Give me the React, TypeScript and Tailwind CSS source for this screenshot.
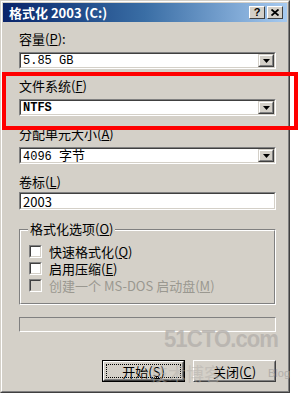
import React from "react";

const cjk = { fontFamily: '"Noto Sans CJK SC", "Liberation Sans", sans-serif' };
const mono = { fontFamily: '"Liberation Mono", "Noto Sans CJK SC", monospace' };

function Sunken({ children, className = "" }: { children?: React.ReactNode; className?: string }) {
  return (
    <div className={"border border-t-[#808080] border-l-[#808080] border-b-white border-r-white " + className}>
      <div className="h-full w-full border border-t-[#404040] border-l-[#404040] border-b-[#d4d0c8] border-r-[#d4d0c8]">
        {children}
      </div>
    </div>
  );
}

function DropBtn() {
  return (
    <div className="h-full w-[16px] border border-t-[#d4d0c8] border-l-[#d4d0c8] border-b-[#404040] border-r-[#404040] bg-[#d4d0c8]">
      <div className="flex h-full w-full items-center justify-center border border-t-white border-l-white border-b-[#808080] border-r-[#808080]">
        <svg width="7" height="4" viewBox="0 0 7 4">
          <path d="M0 0 H7 L3.5 4 Z" fill="#000" />
        </svg>
      </div>
    </div>
  );
}

function Combo({ value, top }: { value: React.ReactNode; top: string }) {
  return (
    <Sunken className={"h-[17px] w-[257px] " + top}>
      <div className="flex h-full bg-white">
        <div className="flex flex-1 items-center pl-[2px] text-[12px] leading-none text-black" style={mono}>
          {value}
        </div>
        <DropBtn />
      </div>
    </Sunken>
  );
}

function Label({ children, top }: { children: React.ReactNode; top: string }) {
  return (
    <div className={"h-[16px] text-[13px] leading-[16px] text-black " + top} style={cjk}>
      {children}
    </div>
  );
}

function Check({ label, disabled }: { label: React.ReactNode; disabled?: boolean }) {
  return (
    <div className="flex h-[17px] items-center">
      <div className="h-[13px] w-[13px] border border-t-[#808080] border-l-[#808080] border-b-white border-r-white">
        <div
          className={
            "h-full w-full border border-t-[#404040] border-l-[#404040] border-b-[#d4d0c8] border-r-[#d4d0c8] " +
            (disabled ? "bg-[#d4d0c8]" : "bg-white")
          }
        />
      </div>
      <div
        className={"ml-[7px] text-[13px] leading-none " + (disabled ? "text-[#9a9890]" : "text-black")}
        style={cjk}
      >
        {label}
      </div>
    </div>
  );
}

function Btn({ children, isDefault }: { children: React.ReactNode; isDefault?: boolean }) {
  return (
    <div className={"h-[22px] w-[83px] bg-[#d4d0c8] " + (isDefault ? "border border-black" : "")}>
      <div className="h-full w-full border border-t-white border-l-white border-b-[#404040] border-r-[#404040]">
        <div className="flex h-full w-full items-center justify-center border border-t-[#d4d0c8] border-l-[#d4d0c8] border-b-[#808080] border-r-[#808080] p-[1px]">
          <div
            className={
              "flex h-full w-full items-center justify-center text-[13px] leading-none text-black " +
              (isDefault ? "border border-dotted border-black" : "")
            }
            style={cjk}
          >
            {children}
          </div>
        </div>
      </div>
    </div>
  );
}

export default function App() {
  return (
    <div className="relative h-[394px] w-[300px] overflow-hidden bg-white">
      {/* window */}
      <div className="h-[393px] w-[290px] border border-t-[#d4d0c8] border-l-[#d4d0c8] border-b-[#404040] border-r-[#404040]">
        <div className="flex h-full w-full flex-col border border-t-white border-l-white border-b-[#808080] border-r-[#808080] bg-[#d4d0c8] px-[1px] pt-[1px]">
          {/* title bar */}
          <div className="flex h-[19px] items-center bg-gradient-to-r from-[#0a246a] via-[#3a6ea5] to-[#a6caf0] pl-[6px] pr-[4px]">
            <div className="flex-1 text-[13px] font-bold leading-none text-white" style={cjk}>
              格式化 2003 (C:)
            </div>
            <div className="flex gap-[1px]">
              <div className="h-[13px] w-[16px] border border-t-white border-l-white border-b-[#404040] border-r-[#404040] bg-[#d4d0c8]">
                <div
                  className="flex h-full w-full items-center justify-center text-[11px] font-bold leading-none text-black"
                  style={{ fontFamily: '"Liberation Sans", sans-serif' }}
                >
                  ?
                </div>
              </div>
              <div className="ml-[1px] h-[13px] w-[16px] border border-t-white border-l-white border-b-[#404040] border-r-[#404040] bg-[#d4d0c8]">
                <div className="flex h-full w-full items-center justify-center">
                  <svg width="8" height="7" viewBox="0 0 8 7">
                    <path d="M0.5 0.5 L7.5 6.5 M7.5 0.5 L0.5 6.5" stroke="#000" strokeWidth="1.8" />
                  </svg>
                </div>
              </div>
            </div>
          </div>

          {/* content */}
          <div className="flex flex-col pl-[16px]">
            <Label top="mt-[9px]">
              容量(<u>P</u>):
            </Label>
            <Combo top="mt-[5px]" value="5.85 GB" />

            <Label top="mt-[9px]">
              文件系统(<u>F</u>)
            </Label>
            <Combo top="mt-[5px]" value={<span className="font-bold">NTFS</span>} />

            <Label top="mt-[10px]">
              分配单元大小(<u>A</u>)
            </Label>
            <Combo
              top="mt-[5px]"
              value={
                <span>
                  4096{" "}
                  <span style={cjk} className="text-[13px]">
                    字节
                  </span>
                </span>
              }
            />

            <Label top="mt-[10px]">
              卷标(<u>L</u>)
            </Label>
            <Sunken className="mt-[2px] h-[18px] w-[257px]">
              <div className="flex h-full items-center bg-white pl-[2px] text-[13px] leading-none text-black" style={cjk}>
                2003
              </div>
            </Sunken>

            {/* group box */}
            <div className="relative mt-[19px] h-[76px] w-[257px] border border-t-[#808080] border-l-[#808080] border-b-white border-r-white">
              <div className="h-full w-full border border-t-white border-l-white border-b-[#808080] border-r-[#808080] pl-[8px] pt-[12px]">
                <Check label={<>快速格式化(<u>Q</u>)</>} />
                <Check label={<>启用压缩(<u>E</u>)</>} />
                <Check disabled label={<>创建一个 MS-DOS 启动盘(<u>M</u>)</>} />
              </div>
              <div
                className="absolute left-[8px] top-[-9px] bg-[#d4d0c8] px-[2px] text-[13px] leading-[16px] text-black"
                style={cjk}
              >
                格式化选项(<u>O</u>)
              </div>
            </div>

            {/* progress */}
            <div className="mt-[12px] h-[15px] w-[257px] border border-t-[#808080] border-l-[#808080] border-b-white border-r-white" />

            {/* buttons */}
            <div className="mt-[28px] flex w-[257px] justify-end gap-[8px]">
              <Btn isDefault>
                开始(<u>S</u>)
              </Btn>
              <Btn>
                关闭(<u>C</u>)
              </Btn>
            </div>
          </div>
        </div>
      </div>

      {/* watermark */}
      <div
        className="pointer-events-none absolute left-[164px] top-[327px] origin-left scale-x-[0.92] text-[24px] font-bold leading-none tracking-[-1px] text-[#b4b0ac] opacity-80"
        style={{ fontFamily: '"Liberation Sans", sans-serif' }}
      >
        51CTO.com
      </div>
      <div
        className="pointer-events-none absolute left-[150px] top-[364px] text-[18px] leading-none text-[#b4b0ac] opacity-50"
        style={cjk}
      >
        技术博客
      </div>
      <div
        className="pointer-events-none absolute left-[268px] top-[368px] text-[11px] leading-none text-[#aaa6a2] opacity-80"
        style={{ fontFamily: '"Liberation Sans", sans-serif' }}
      >
        Blog
      </div>

      {/* red highlight */}
      <div className="pointer-events-none absolute left-[2px] top-[72px] h-[58px] w-[296px] border-[4px] border-[#ff0000]" />
    </div>
  );
}
